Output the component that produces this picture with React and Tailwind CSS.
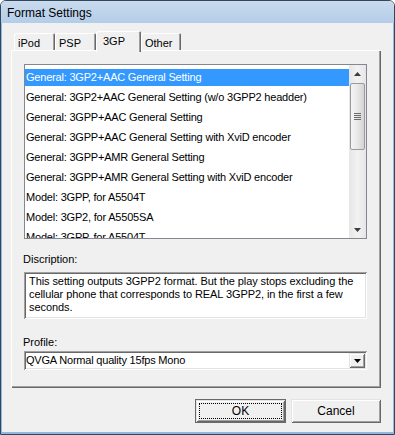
import React from "react";

const raised =
  "shadow-[inset_1px_1px_0_#e3e3e3,inset_-1px_-1px_0_#696969,inset_2px_2px_0_#ffffff,inset_-2px_-2px_0_#a0a0a0]";
const sunken =
  "shadow-[inset_1px_1px_0_#a0a0a0,inset_-1px_-1px_0_#ffffff,inset_2px_2px_0_#696969,inset_-2px_-2px_0_#e3e3e3]";

const items = [
  "General: 3GP2+AAC General Setting",
  "General: 3GP2+AAC General Setting (w/o 3GPP2 headder)",
  "General: 3GPP+AAC General Setting",
  "General: 3GPP+AAC General Setting with XviD encoder",
  "General: 3GPP+AMR General Setting",
  "General: 3GPP+AMR General Setting with XviD encoder",
  "Model: 3GPP, for A5504T",
  "Model: 3GP2, for A5505SA",
  "Model: 3GPP, for A5504T",
];

function Tab({ label, w, selected }) {
  if (selected) {
    return (
      <div
        className="relative z-10 h-[21px] -mb-[2px] bg-[#f0f0f0] rounded-t-[2px] shadow-[inset_1px_1px_0_#ffffff,inset_-1px_0_0_#696969,inset_-2px_0_0_#a0a0a0] flex items-start pt-[2px] pl-[7px]"
        style={{ width: w }}
      >
        {label}
      </div>
    );
  }
  return (
    <div
      className="h-[17px] bg-[#f0f0f0] rounded-t-[2px] shadow-[inset_1px_1px_0_#ffffff,inset_-1px_0_0_#696969,inset_-2px_0_0_#a0a0a0] flex items-start pt-[2px] pl-[4px]"
      style={{ width: w }}
    >
      {label}
    </div>
  );
}

function UpArrow() {
  return (
    <svg width="7" height="4" viewBox="0 0 7 4">
      <path d="M3.5 0 L7 4 L0 4 Z" fill="#3c3c3c" />
    </svg>
  );
}
function DownArrow({ color = "#3c3c3c" }) {
  return (
    <svg width="7" height="4" viewBox="0 0 7 4">
      <path d="M0 0 L7 0 L3.5 4 Z" fill={color} />
    </svg>
  );
}

export default function App() {
  return (
    <div className="w-[395px] h-[435px] bg-white font-['Liberation_Sans',Arial,sans-serif] text-[11px] text-black overflow-hidden">
      <div className="w-full h-full flex flex-col border border-[#34465a] rounded-t-[6px] overflow-hidden">
        {/* Title bar */}
        <div className="h-[22px] shrink-0 bg-gradient-to-b from-[#c9dbee] to-[#b3cde9] flex items-center pl-[6px] text-[12px] pt-[1px]">
          Format Settings
        </div>
        {/* Client */}
        <div className="flex-1 border-x border-b-2 border-[#8fb8e2] bg-[#f0f0f0] flex flex-col pl-[9px] pt-[8px]">
          {/* Tabs */}
          <div className="flex items-end h-[19px] pl-[3px]">
            <Tab label="iPod" w={41} />
            <Tab label="PSP" w={41} />
            <Tab label="3GP" w={45} selected />
            <Tab label="Other" w={40} />
          </div>
          {/* Panel */}
          <div className="w-[370px] h-[338px] shadow-[inset_1px_1px_0_#ffffff,inset_-1px_-1px_0_#696969,inset_-2px_-2px_0_#a0a0a0] flex flex-col pl-[13px] pt-[14px]">
            {/* List */}
            <div className="w-[343px] h-[175px] bg-white border border-[#828790] flex overflow-hidden">
              <div className="flex-1 flex flex-col overflow-hidden pt-[1px] tracking-[-0.2px]">
                {items.map((t, i) => (
                  <div key={i} className="h-[20px] shrink-0 flex flex-col">
                    {i === 0 ? (
                      <div className="mt-[3px] h-[17px] bg-[#3399ff] text-white flex items-center pl-[1px] whitespace-nowrap">
                        {t}
                      </div>
                    ) : (
                      <div className="mt-[3px] h-[17px] flex items-center pl-[1px] whitespace-nowrap">
                        {t}
                      </div>
                    )}
                  </div>
                ))}
              </div>
              {/* Scrollbar */}
              <div className="w-[17px] shrink-0 bg-gradient-to-r from-[#e6e6e6] via-[#f2f2f2] to-[#e6e6e6] flex flex-col items-center">
                <div className="h-[17px] w-full flex items-center justify-center">
                  <UpArrow />
                </div>
                <div className="mt-[1px] w-[15px] h-[67px] rounded-[2px] border border-[#9a9a9a] bg-gradient-to-r from-[#f4f4f4] via-[#e8e8e8] to-[#d4d4d4] flex flex-col items-center justify-center gap-[1px]">
                  <div className="w-[7px] h-[1px] bg-[#6a6a6a]" />
                  <div className="w-[7px] h-[1px] bg-[#6a6a6a]" />
                  <div className="w-[7px] h-[1px] bg-[#6a6a6a]" />
                  <div className="w-[7px] h-[1px] bg-[#6a6a6a]" />
                </div>
                <div className="flex-1" />
                <div className="h-[17px] w-full flex items-center justify-center">
                  <DownArrow />
                </div>
              </div>
            </div>

            {/* Description */}
            <div className="mt-[14px] h-[13px] leading-[13px] -ml-[1px]">Discription:</div>
            <div className={`mt-[6px] w-[343px] h-[47px] bg-white ${sunken} pl-[5px] pt-[3px] leading-[13px] tracking-[-0.08px]`}>
              <div className="whitespace-nowrap">This setting outputs 3GPP2 format. But the play stops excluding the</div>
              <div className="whitespace-nowrap">cellular phone that corresponds to REAL 3GPP2, in the first a few</div>
              <div className="whitespace-nowrap">seconds.</div>
            </div>

            {/* Profile */}
            <div className="mt-[17px] h-[13px] leading-[13px] -ml-[1px]">Profile:</div>
            <div className={`mt-[2px] w-[343px] h-[19px] bg-white ${sunken} flex items-center pl-[2px] pr-[2px]`}>
              <div className="flex-1 whitespace-nowrap tracking-[-0.2px]">QVGA Normal quality 15fps Mono</div>
              <div className={`w-[16px] h-[15px] bg-[#f0f0f0] ${raised} flex items-center justify-center`}>
                <DownArrow color="#000000" />
              </div>
            </div>
          </div>

          {/* Buttons */}
          <div className="w-[370px] flex justify-end gap-[5px] mt-[11px]">
            <div className="w-[91px] h-[24px] border border-[#696969] bg-[#f0f0f0] flex">
              <div className={`flex-1 ${raised} p-[3px] flex`}>
                <div className="flex-1 border border-dotted border-black flex items-center justify-center text-[12px]">
                  OK
                </div>
              </div>
            </div>
            <div className={`w-[90px] h-[24px] bg-[#f0f0f0] ${raised} flex items-center justify-center text-[12px]`}>
              Cancel
            </div>
          </div>
        </div>
      </div>
    </div>
  );
}
